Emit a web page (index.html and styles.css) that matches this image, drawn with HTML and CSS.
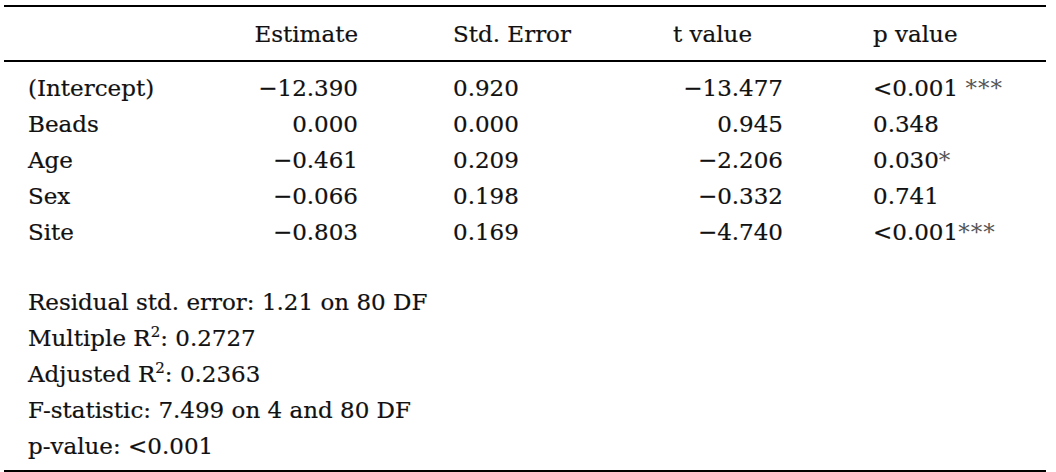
FILE: index.html
```html
<!DOCTYPE html>
<html lang="en">
<head>
<meta charset="utf-8">
<title>Regression table</title>
<link rel="stylesheet" href="styles.css">
</head>
<body>
<div class="tbl">
  <div class="row head">
    <div class="c lab"></div>
    <div class="c est">Estimate</div>
    <div class="c se">Std. Error</div>
    <div class="c tv">t value</div>
    <div class="c pv">p value</div>
  </div>
  <div class="body">
    <div class="row">
      <div class="c lab">(Intercept)</div>
      <div class="c est">−12.390</div>
      <div class="c se">0.920</div>
      <div class="c tv r">−13.477</div>
      <div class="c pv">&lt;0.001 <span class="star">***</span></div>
    </div>
    <div class="row">
      <div class="c lab">Beads</div>
      <div class="c est">0.000</div>
      <div class="c se">0.000</div>
      <div class="c tv r">0.945</div>
      <div class="c pv">0.348</div>
    </div>
    <div class="row">
      <div class="c lab">Age</div>
      <div class="c est">−0.461</div>
      <div class="c se">0.209</div>
      <div class="c tv r">−2.206</div>
      <div class="c pv">0.030<span class="star">*</span></div>
    </div>
    <div class="row">
      <div class="c lab">Sex</div>
      <div class="c est">−0.066</div>
      <div class="c se">0.198</div>
      <div class="c tv r">−0.332</div>
      <div class="c pv">0.741</div>
    </div>
    <div class="row">
      <div class="c lab">Site</div>
      <div class="c est">−0.803</div>
      <div class="c se">0.169</div>
      <div class="c tv r">−4.740</div>
      <div class="c pv">&lt;0.001<span class="star">***</span></div>
    </div>
  </div>
  <div class="foot">
    <div class="fl">Residual std. error: 1.21 on 80 DF</div>
    <div class="fl">Multiple R<sup class="sup">2</sup>: 0.2727</div>
    <div class="fl">Adjusted R<sup class="sup">2</sup>: 0.2363</div>
    <div class="fl">F-statistic: 7.499 on 4 and 80 DF</div>
    <div class="fl">p-value: &lt;0.001</div>
  </div>
</div>
</body>
</html>
```

FILE: styles.css
```css
html, body {
  margin: 0;
  padding: 0;
  background: #ffffff;
}
body {
  font-family: "DejaVu Serif", "Liberation Serif", serif;
  font-size: 23px;
  color: #111111;
  -webkit-text-stroke: 0.2px #111111;
}
.tbl {
  margin: 5px 10px 0 4px;
  border-top: 2px solid #000;
  border-bottom: 2px solid #000;
}
.row {
  display: grid;
  grid-template-columns: 225px 105px 315px 110px 1fr;
  padding-left: 24px;
  height: 36px;
  line-height: 36px;
  white-space: nowrap;
}
.row.head {
  height: 53px;
  line-height: 55px;
  border-bottom: 2px solid #000;
}
.body {
  padding-top: 8px;
  padding-bottom: 34px;
}
.est {
  text-align: right;
}
.se {
  padding-left: 95px;
}
.tv.r {
  text-align: right;
}
.pv {
  padding-left: 90px;
}
.star {
  color: #555555;
  letter-spacing: 1px;
  -webkit-text-stroke: 0;
}
.foot {
  padding-left: 24px;
  padding-bottom: 6px;
}
.fl {
  height: 36px;
  line-height: 36px;
  white-space: nowrap;
}
.sup {
  font-size: 15px;
  line-height: 0;
  vertical-align: 9px;
}
```
